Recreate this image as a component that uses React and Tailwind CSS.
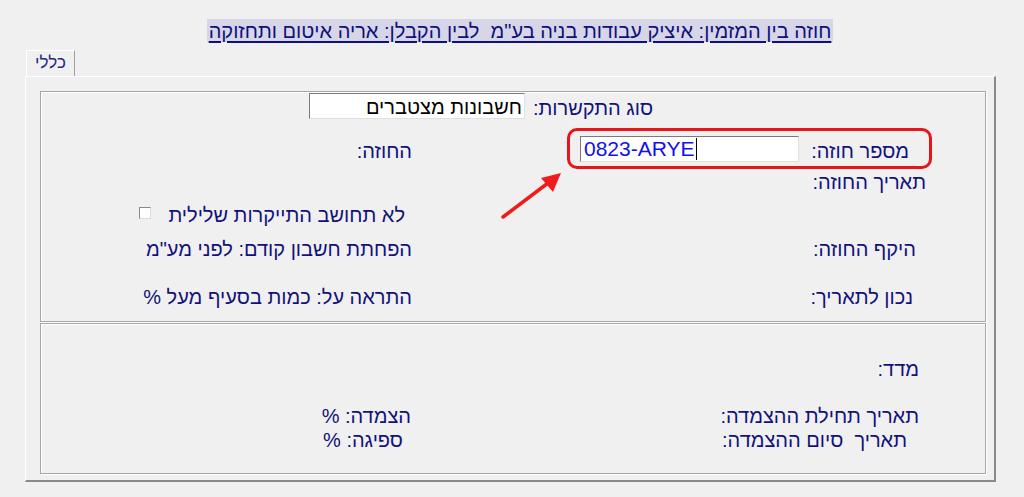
import React from "react";

const F = { fontFamily: '"Liberation Sans", Arial, sans-serif' };

function Lbl({ children, className = "" }) {
  return <span className={"whitespace-pre text-[#12127a] text-[20px] leading-none pt-[4px] " + className}>{children}</span>;
}

export default function App() {
  return (
    <div className="relative w-[1024px] h-[497px] overflow-hidden bg-[#f0f0f0]" style={F}>
      {/* title */}
      <div className="pt-[19px] pl-[207px]">
        <div dir="rtl" className="w-[626px] h-[23px] bg-[#d6d6e8] flex items-center justify-center">
          <span className="whitespace-pre text-[#10107a] text-[20px] leading-none underline underline-offset-[3px]">
            חוזה בין המזמין: איציק עבודות בניה בע"מ  לבין הקבלן: אריה איטום ותחזוקה
          </span>
        </div>
      </div>

      {/* tab */}
      <div className="mt-[8px] pl-[26px]">
        <div className="w-[49px] h-[26px] border-t border-l border-white border-r border-r-[#a0a0a0] bg-[#f0f0f0] flex items-center justify-center pb-[2px]">
          <span className="text-[#2a2a80] text-[17px] leading-none" dir="rtl">כללי</span>
        </div>
      </div>

      {/* panel */}
      <div className="ml-[25px] w-[971px] h-[406px] border-t border-l border-white border-r-2 border-b-2 border-r-[#8a8a8a] border-b-[#8a8a8a] pt-[14px] pl-[14px]">
        {/* upper group */}
        <div dir="rtl" className="w-[946px] h-[231px] border border-[#a6a6a6] shadow-[inset_1px_1px_0_#ffffff,1px_1px_0_#ffffff]">
          {/* row 1 */}
          <div className="mt-[1px] h-[26px] flex items-center pr-[332px] gap-[8px]">
            <Lbl>סוג התקשרות:</Lbl>
            <div className="w-[216px] h-[26px] bg-white border border-[#7a7a7a] border-r-[#e0e0e0] border-b-[#e0e0e0] flex items-center pr-[2px]">
              <span className="text-black text-[20px] leading-none pt-[2px]">חשבונות מצטברים</span>
            </div>
          </div>
          {/* row 2 */}
          <div className="mt-[9px] h-[41px] flex items-center">
            <div className="w-[573px] pr-[53px] flex">
              <div className="w-[365px] h-[41px] border-[3px] border-[#e8141a] rounded-[10px] flex items-center pr-[20px]">
                <Lbl className="w-[95px] shrink-0">מספר חוזה:</Lbl>
                <div className="mr-[15px] w-[219px] h-[26px] bg-white border border-[#7a7a7a] border-r-[#e0e0e0] border-b-[#e0e0e0] flex items-center" dir="ltr">
                  <span className="pl-[3px] text-[#1010f0] text-[21px] leading-none">0823-ARYE</span>
                  <span className="ml-[1px] w-[1px] h-[22px] bg-black"></span>
                </div>
              </div>
            </div>
            <Lbl>החוזה:</Lbl>
          </div>
          {/* row 3 */}
          <div className="h-[22px] flex items-center">
            <div className="w-[573px] pr-[59px] flex"><Lbl>תאריך החוזה:</Lbl></div>
          </div>
          {/* row 4 */}
          <div className="mt-[9px] h-[26px] flex items-center">
            <div className="w-[573px]"></div>
            <div className="pr-[7px] flex items-center">
              <Lbl className="text-[19.6px]">לא תחושב התייקרות שלילית</Lbl>
              <span className="mr-[17px] w-[12px] h-[12px] bg-white border border-[#8a8a8a] border-r-[#dcdcdc] border-b-[#dcdcdc]"></span>
            </div>
          </div>
          {/* row 5 */}
          <div className="mt-[8px] h-[26px] flex items-center">
            <div className="w-[573px] pr-[69px] flex"><Lbl>היקף החוזה:</Lbl></div>
            <Lbl>הפחתת חשבון קודם: לפני מע"מ</Lbl>
          </div>
          {/* row 6 */}
          <div className="mt-[22px] h-[26px] flex items-center">
            <div className="w-[573px] pr-[72px] flex"><Lbl>נכון לתאריך:</Lbl></div>
            <Lbl>התראה על: כמות בסעיף מעל %</Lbl>
          </div>
        </div>

        {/* lower group */}
        <div dir="rtl" className="mt-[1px] w-[946px] h-[151px] border border-[#a6a6a6] shadow-[inset_1px_1px_0_#ffffff,1px_1px_0_#ffffff]">
          <div className="mt-[30px] h-[26px] flex items-center">
            <div className="w-[573px] pr-[66px] flex"><Lbl>מדד:</Lbl></div>
          </div>
          <div className="mt-[22px] h-[24px] flex items-center">
            <div className="w-[573px] pr-[66px] flex"><Lbl className="text-[19.4px]">תאריך תחילת ההצמדה:</Lbl></div>
            <Lbl className="pr-[1px]">הצמדה: %</Lbl>
          </div>
          <div className="h-[24px] flex items-center">
            <div className="w-[573px] pr-[78px] flex"><Lbl className="text-[19.4px]">{"תאריך  סיום ההצמדה:"}</Lbl></div>
            <Lbl className="pr-[9px]">ספיגה: %</Lbl>
          </div>
        </div>
      </div>

      {/* red arrow annotation */}
      <svg className="absolute left-[495px] top-[165px]" width="75" height="60" viewBox="495 165 75 60">
        <line x1="503" y1="217" x2="548" y2="183" stroke="#ee1c1c" strokeWidth="3.5" strokeLinecap="round" />
        <polygon points="561,173 541,178 553,192" fill="#ee1c1c" />
      </svg>
    </div>
  );
}
